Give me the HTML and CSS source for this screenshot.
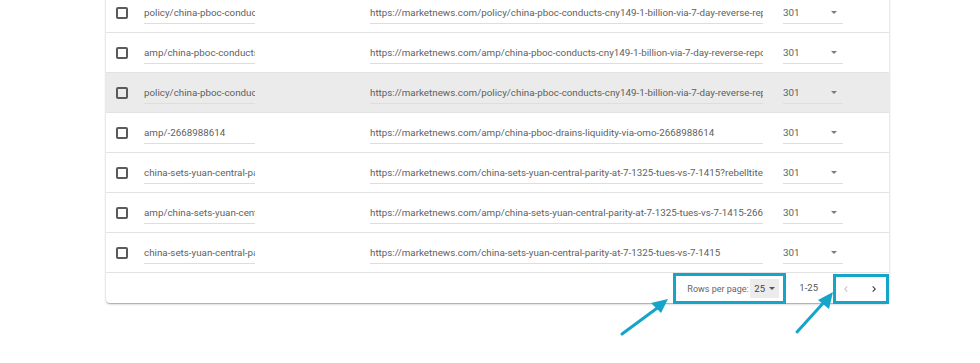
FILE: index.html
```html
<!DOCTYPE html>
<html>
<head>
<meta charset="utf-8">
<link rel="stylesheet" href="styles.css">
</head>
<body>
<div class="page">
  <div class="card">
    <div class="row">
      <span class="checkbox"></span>
      <div class="field c1">policy/china-pboc-conducts-cny149-1-billion-via-7-day-reverse-repo</div>
      <div class="field c2">https://marketnews.com/policy/china-pboc-conducts-cny149-1-billion-via-7-day-reverse-repo</div>
      <div class="field c3"><span>301</span><span class="caret"></span></div>
    </div>
    <div class="row">
      <span class="checkbox"></span>
      <div class="field c1">amp/china-pboc-conducts-cny149-1-billion-via-7-day-reverse-repo</div>
      <div class="field c2">https://marketnews.com/amp/china-pboc-conducts-cny149-1-billion-via-7-day-reverse-repo</div>
      <div class="field c3"><span>301</span><span class="caret"></span></div>
    </div>
    <div class="row hover">
      <span class="checkbox"></span>
      <div class="field c1">policy/china-pboc-conducts-cny149-1-billion-via-7-day-reverse-repo</div>
      <div class="field c2">https://marketnews.com/policy/china-pboc-conducts-cny149-1-billion-via-7-day-reverse-repo</div>
      <div class="field c3"><span>301</span><span class="caret"></span></div>
    </div>
    <div class="row">
      <span class="checkbox"></span>
      <div class="field c1">amp/-2668988614</div>
      <div class="field c2">https://marketnews.com/amp/china-pboc-drains-liquidity-via-omo-2668988614</div>
      <div class="field c3"><span>301</span><span class="caret"></span></div>
    </div>
    <div class="row">
      <span class="checkbox"></span>
      <div class="field c1">china-sets-yuan-central-parity-at-7-1325-tues-vs-7-1415</div>
      <div class="field c2">https://marketnews.com/china-sets-yuan-central-parity-at-7-1325-tues-vs-7-1415?rebelltitem=1</div>
      <div class="field c3"><span>301</span><span class="caret"></span></div>
    </div>
    <div class="row">
      <span class="checkbox"></span>
      <div class="field c1">amp/china-sets-yuan-central-parity-at-7-1325-tues-vs-7-1415</div>
      <div class="field c2">https://marketnews.com/amp/china-sets-yuan-central-parity-at-7-1325-tues-vs-7-1415-2668988614</div>
      <div class="field c3"><span>301</span><span class="caret"></span></div>
    </div>
    <div class="row">
      <span class="checkbox"></span>
      <div class="field c1">china-sets-yuan-central-parity-at-7-1325-tues-vs-7-1415</div>
      <div class="field c2">https://marketnews.com/china-sets-yuan-central-parity-at-7-1325-tues-vs-7-1415</div>
      <div class="field c3"><span>301</span><span class="caret"></span></div>
    </div>
    <div class="footer">
      <div class="rpp hl">
        <span class="rpp-label">Rows per page:</span>
        <span class="select">25<span class="caret dark"></span></span>
      </div>
      <span class="range">1-25</span>
      <div class="nav hl">
        <span class="navbtn">
          <svg width="12" height="12" viewBox="0 0 24 24"><path d="M15.41 7.41 14 6l-6 6 6 6 1.41-1.41L10.83 12z" fill="#c4c4c4"/></svg>
        </span>
        <span class="navbtn">
          <svg width="12" height="12" viewBox="0 0 24 24"><path d="M10 6 8.59 7.41 13.17 12l-4.58 4.59L10 18l6-6z" fill="#333"/></svg>
        </span>
      </div>
    </div>
  </div>
  <svg class="arrows" width="980" height="363" viewBox="0 0 980 363">
    <line x1="622" y1="341" x2="660" y2="313" stroke="#16a5c8" stroke-width="3" stroke-linecap="round"/>
    <polygon points="668,306 651,310 661,320" fill="#16a5c8"/>
    <line x1="797" y1="339" x2="826" y2="307" stroke="#16a5c8" stroke-width="3" stroke-linecap="round"/>
    <polygon points="833,299 818,307 829,316" fill="#16a5c8"/>
  </svg>
</div>
</body>
</html>
```

FILE: styles.css
```css
html, body {
  margin: 0;
  padding: 0;
  background: #ffffff;
}

body {
  font-family: Roboto, "Liberation Sans", sans-serif;
  color: #616161;
  width: 980px;
  height: 363px;
  overflow: hidden;
}

.page {
  position: relative;
  width: 980px;
  height: 363px;
}

.card {
  margin: -7px 0 0 106px;
  width: 783px;
  background: #fff;
  border-radius: 0 0 4px 4px;
  box-shadow: 0 1px 3px rgba(0, 0, 0, 0.2), 0 1px 1px rgba(0, 0, 0, 0.12), 0 2px 1px -1px rgba(0, 0, 0, 0.1);
}

.row {
  display: flex;
  align-items: center;
  height: 39px;
  border-bottom: 1px solid #e3e3e3;
  padding-left: 10px;
}

.row.hover {
  background: #ebebeb;
}

.checkbox {
  flex: none;
  width: 12px;
  height: 12px;
  box-sizing: border-box;
  border: 2px solid #5a5a5a;
  border-radius: 2px;
}

.field {
  flex: none;
  height: 21px;
  margin-top: 1px;
  box-sizing: border-box;
  border-bottom: 1px solid #dedede;
  font-size: 9.8px;
  line-height: 20px;
  color: #5f5f5f;
  white-space: nowrap;
  overflow: hidden;
}

.c1 {
  margin-left: 16px;
  width: 111px;
}

.c2 {
  margin-left: 115px;
  width: 393px;
}

.c3 {
  margin-left: 20px;
  width: 60px;
  display: flex;
  align-items: center;
  justify-content: space-between;
  padding-right: 6px;
}

.caret {
  display: inline-block;
  width: 0;
  height: 0;
  border-left: 3px solid transparent;
  border-right: 3px solid transparent;
  border-top: 3px solid #7a7a7a;
}

.caret.dark {
  border-top-color: #555;
  margin-left: 4px;
}

.footer {
  display: flex;
  justify-content: flex-end;
  align-items: flex-start;
  height: 30px;
}

.hl {
  box-sizing: border-box;
  border: 3px solid #16a5c8;
  height: 31px;
  display: flex;
  align-items: center;
}

.rpp {
  width: 113px;
  padding: 0 4px 0 11px;
}

.rpp-label {
  font-size: 9px;
  color: #666;
}

.select {
  margin-left: auto;
  width: 29px;
  height: 19px;
  box-sizing: border-box;
  background: #ececec;
  padding-left: 4px;
  display: flex;
  align-items: center;
  font-size: 9.5px;
  color: #444;
}

.range {
  font-size: 9.5px;
  color: #555;
  margin-left: 13px;
  margin-right: 15px;
  line-height: 30px;
}

.nav {
  width: 56px;
  margin-top: 1px;
  height: 30px;
  gap: 8px;
}

.navbtn {
  width: 20px;
  height: 20px;
  display: flex;
  align-items: center;
  justify-content: center;
}

.arrows {
  position: absolute;
  left: 0;
  top: 0;
  pointer-events: none;
}
```
